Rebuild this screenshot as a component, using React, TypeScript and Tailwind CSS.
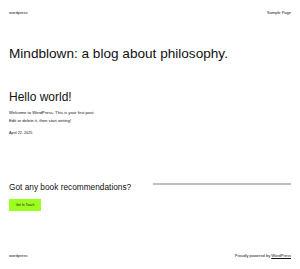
export default function App() {
  return (
    <div className="w-[300px] h-[269px] bg-white text-[#111] flex flex-col px-[9px]" style={{ fontFamily: '"Liberation Sans", Arial, sans-serif' }}>
      <header className="flex justify-between items-center h-[26px] text-[4px]">
        <span>wordpress</span>
        <span>Sample Page</span>
      </header>
      <h1 className="mt-[19px] text-[13.6px] leading-[18px]">Mindblown: a blog about philosophy.</h1>
      <section className="mt-[26px]">
        <h2 className="text-[12px] leading-[16px]">Hello world!</h2>
        <div className="mt-[4px] text-[4.2px] leading-[8px]">
          <p>Welcome to WordPress. This is your first post.</p>
          <p>Edit or delete it, then start writing!</p>
        </div>
        <p className="mt-[5px] text-[3.8px] leading-[6px]">April 22, 2025</p>
      </section>
      <section className="mt-[45px] flex items-start">
        <div className="w-[144px]">
          <h3 className="text-[8.3px] leading-[12px] whitespace-nowrap">Got any book recommendations?</h3>
          <button className="mt-[6px] bg-[#9dff20] text-[3.3px] w-[32px] h-[12px] block">Get In Touch</button>
        </div>
        <div className="flex-1 mt-[2px] h-[2px] bg-[#bfbfbf]"></div>
      </section>
      <footer className="mt-auto mb-[10px] flex justify-between text-[4px]">
        <span>wordpress</span>
        <span>Proudly powered by <span className="underline">WordPress</span></span>
      </footer>
    </div>
  );
}
